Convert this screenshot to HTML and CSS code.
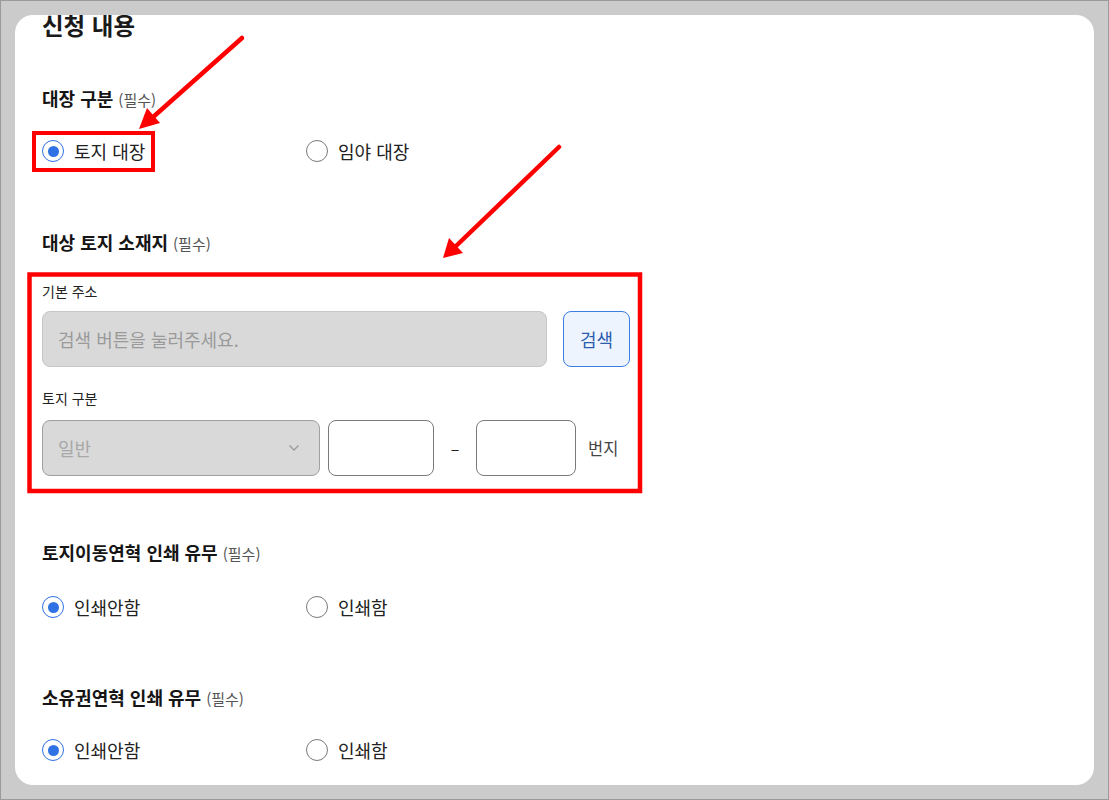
FILE: index.html
```html
<!DOCTYPE html>
<html lang="ko">
<head>
  <meta charset="UTF-8">
  <meta name="viewport" content="width=device-width, initial-scale=1.0">
  <title>신청 내용</title>
  <link rel="stylesheet" href="styles.css">
</head>
<body>
  <div class="frame">
    <div class="card">
      <h2 class="page-title">신청 내용</h2>

      <div class="field-title first">대장 구분 <span class="req">(필수)</span></div>
      <div class="radio-row row-1">
        <label class="option"><span class="radio checked"></span>토지 대장</label>
        <label class="option"><span class="radio"></span>임야 대장</label>
      </div>

      <div class="field-title after-radio">대상 토지 소재지 <span class="req">(필수)</span></div>
      <div class="address">
        <div class="sub-label">기본 주소</div>
        <div class="addr-row">
          <input class="addr-input" type="text" placeholder="검색 버튼을 눌러주세요." readonly>
          <button class="search-btn">검색</button>
        </div>
        <div class="sub-label second">토지 구분</div>
        <div class="lot-row">
          <div class="select">
            <span>일반</span>
            <svg width="12" height="8" viewBox="0 0 12 8"><path d="M1.5 1.5 L6 6 L10.5 1.5" fill="none" stroke="#9a9a9a" stroke-width="1.3"/></svg>
          </div>
          <input class="num-input" type="text">
          <span class="dash">–</span>
          <input class="num-input narrow" type="text">
          <span class="unit">번지</span>
        </div>
      </div>

      <div class="field-title after-address">토지이동연혁 인쇄 유무 <span class="req">(필수)</span></div>
      <div class="radio-row row-2">
        <label class="option"><span class="radio checked"></span>인쇄안함</label>
        <label class="option"><span class="radio"></span>인쇄함</label>
      </div>

      <div class="field-title after-radio last">소유권연혁 인쇄 유무 <span class="req">(필수)</span></div>
      <div class="radio-row row-3">
        <label class="option"><span class="radio checked"></span>인쇄안함</label>
        <label class="option"><span class="radio"></span>인쇄함</label>
      </div>
    </div>

    <!-- annotation marks -->
    <svg class="marks" width="1109" height="800" viewBox="0 0 1109 800">
      <rect x="34" y="133" width="119" height="37" fill="none" stroke="#ff0000" stroke-width="4"/>
      <rect x="29.5" y="274.5" width="610.5" height="216.5" fill="none" stroke="#ff0000" stroke-width="4.5"/>
      <line x1="242" y1="38" x2="152" y2="118" stroke="#ff0000" stroke-width="4.5" stroke-linecap="round"/>
      <polygon points="139,129 160,123 147,108" fill="#ff0000"/>
      <line x1="559" y1="147" x2="455" y2="247" stroke="#ff0000" stroke-width="4.5" stroke-linecap="round"/>
      <polygon points="443,258 463,253 449,238" fill="#ff0000"/>
    </svg>
  </div>
</body>
</html>
```

FILE: styles.css
```css
body {
  margin: 0;
  font-family: "Noto Sans CJK KR", "Noto Sans", sans-serif;
  color: #222;
}
.frame {
  position: relative;
  box-sizing: border-box;
  width: 1109px;
  height: 800px;
  border: 1px solid #9a9a9a;
  background-color: #cbcbcb;
  padding: 14px;
}
.card {
  box-sizing: border-box;
  height: 100%;
  background-color: #fff;
  border-radius: 18px;
  padding: 0 27px;
  overflow: hidden;
}
.page-title {
  margin: -3px 0 0 0;
  font-size: 23.5px;
  line-height: 26px;
  font-weight: 700;
  color: #1a1a1a;
}
.field-title {
  font-size: 18px;
  line-height: 24px;
  font-weight: 700;
  color: #151515;
}
.field-title.first {
  margin-top: 48px;
}
.field-title.after-radio {
  margin-top: 67px;
}
.field-title.after-radio.last {
  margin-top: 66px;
}
.field-title.after-address {
  margin-top: 64px;
}
.req {
  font-size: 15px;
  font-weight: 400;
  color: #555;
}
.radio-row {
  display: flex;
  height: 24px;
}
.row-1 {
  margin-top: 27px;
}
.row-2 {
  margin-top: 29px;
}
.row-3 {
  margin-top: 27px;
}
.option {
  display: flex;
  align-items: center;
  gap: 10px;
  width: 264px;
  font-size: 18px;
  line-height: 24px;
  color: #222;
}
.radio {
  box-sizing: border-box;
  width: 22px;
  height: 22px;
  border-radius: 50%;
  border: 1.5px solid #7a7a7a;
  display: flex;
  align-items: center;
  justify-content: center;
}
.radio.checked {
  border-color: #2f72e4;
}
.radio.checked::after {
  content: "";
  width: 11px;
  height: 11px;
  border-radius: 50%;
  background-color: #2f72e4;
}
.address {
  margin-top: 26px;
}
.sub-label {
  font-size: 14px;
  line-height: 18px;
  color: #222;
}
.sub-label.second {
  margin-top: 22px;
}
.addr-row {
  display: flex;
  gap: 16px;
  margin-top: 11px;
}
.addr-input {
  box-sizing: border-box;
  width: 505px;
  height: 56px;
  background-color: #d9d9d9;
  border: 1px solid #c6c6c6;
  border-radius: 8px;
  padding: 0 15px;
  font-family: inherit;
  font-size: 18px;
  outline: none;
}
.addr-input::placeholder {
  color: #9a9a9a;
}
.search-btn {
  box-sizing: border-box;
  width: 67px;
  height: 56px;
  background-color: #eef4fe;
  border: 1px solid #3a7ee4;
  border-radius: 8px;
  font-family: inherit;
  font-size: 18px;
  color: #2b5cae;
  padding: 0;
}
.lot-row {
  display: flex;
  align-items: center;
  margin-top: 13px;
  height: 56px;
}
.select {
  box-sizing: border-box;
  width: 278px;
  height: 56px;
  display: flex;
  align-items: center;
  justify-content: space-between;
  background-color: #d9d9d9;
  border: 1px solid #a0a0a0;
  border-radius: 8px;
  padding: 0 19px 0 15px;
  font-size: 18px;
  color: #a8a8a8;
}
.num-input {
  box-sizing: border-box;
  width: 106px;
  height: 56px;
  margin-left: 8px;
  border: 1px solid #7a7a7a;
  border-radius: 8px;
  background: #fff;
  outline: none;
}
.num-input.narrow {
  width: 100px;
  margin-left: 0;
}
.dash {
  width: 42px;
  text-align: center;
  font-size: 16px;
  color: #222;
}
.unit {
  margin-left: 12px;
  font-size: 16.5px;
  color: #444;
}
.marks {
  position: absolute;
  top: -1px;
  left: -1px;
  pointer-events: none;
}
```
